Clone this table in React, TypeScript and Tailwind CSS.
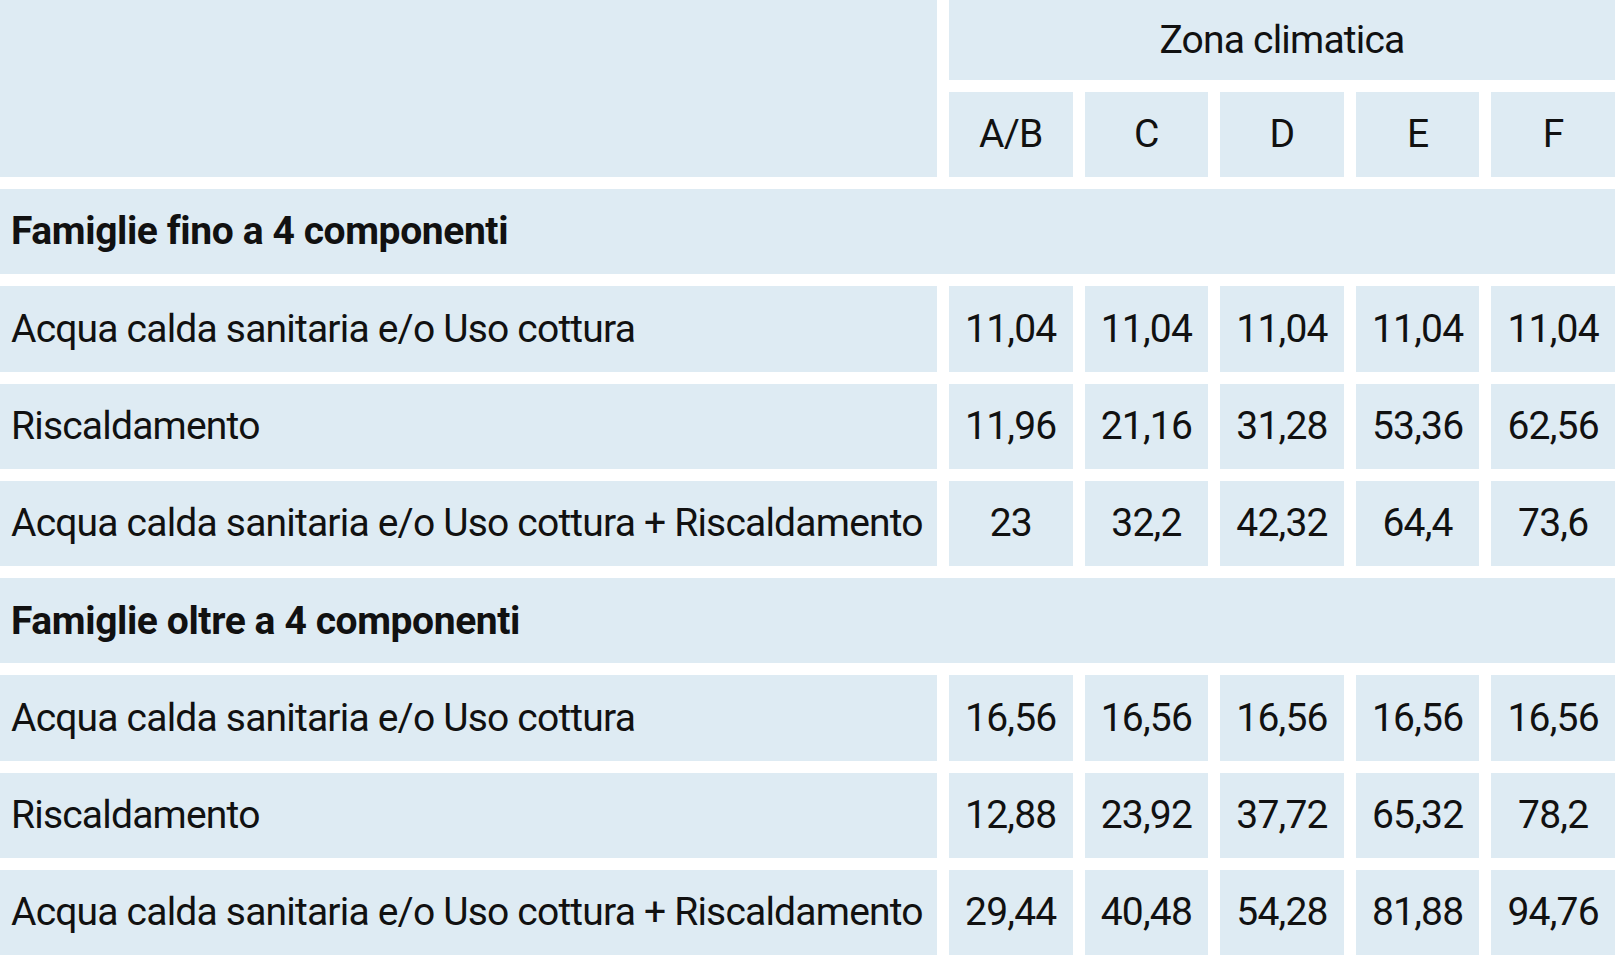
const cols = ["A/B", "C", "D", "E", "F"];

const groups = [
  {
    title: "Famiglie fino a 4 componenti",
    rows: [
      { label: "Acqua calda sanitaria e/o Uso cottura", values: ["11,04", "11,04", "11,04", "11,04", "11,04"] },
      { label: "Riscaldamento", values: ["11,96", "21,16", "31,28", "53,36", "62,56"] },
      { label: "Acqua calda sanitaria e/o Uso cottura + Riscaldamento", values: ["23", "32,2", "42,32", "64,4", "73,6"] },
    ],
  },
  {
    title: "Famiglie oltre a 4 componenti",
    rows: [
      { label: "Acqua calda sanitaria e/o Uso cottura", values: ["16,56", "16,56", "16,56", "16,56", "16,56"] },
      { label: "Riscaldamento", values: ["12,88", "23,92", "37,72", "65,32", "78,2"] },
      { label: "Acqua calda sanitaria e/o Uso cottura + Riscaldamento", values: ["29,44", "40,48", "54,28", "81,88", "94,76"] },
    ],
  },
];

const cell = "bg-[#deebf3] flex items-center whitespace-nowrap";

export default function App() {
  return (
    <div
      className="min-h-screen bg-white text-[#111] text-[39px] tracking-[-0.8px]"
      style={{ fontFamily: "Roboto, 'Liberation Sans', sans-serif" }}
    >
      <div className="grid w-[1615px] grid-cols-[937px_repeat(5,1fr)] gap-[12px]">
        {/* header */}
        <div className={`${cell} row-span-2`} />
        <div className={`${cell} col-span-5 h-[80px] justify-center`}>Zona climatica</div>
        {cols.map((c) => (
          <div key={c} className={`${cell} h-[85px] justify-center`}>
            {c}
          </div>
        ))}

        {groups.map((g) => (
          <div key={g.title} className="contents">
            <div className={`${cell} col-span-6 h-[85.3px] px-[11px] font-bold tracking-[-0.4px]`}>{g.title}</div>
            {g.rows.map((r) => (
              <div key={r.label} className="contents">
                <div className={`${cell} h-[85.3px] px-[11px]`}>{r.label}</div>
                {r.values.map((v, i) => (
                  <div key={i} className={`${cell} h-[85.3px] justify-center`}>
                    {v}
                  </div>
                ))}
              </div>
            ))}
          </div>
        ))}
      </div>
    </div>
  );
}
